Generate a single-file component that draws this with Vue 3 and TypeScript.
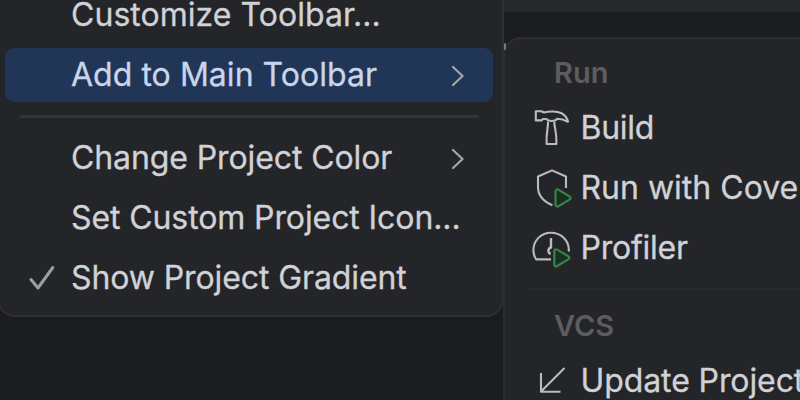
<script setup lang="ts">
interface MenuItem {
  label: string
  submenu?: boolean
  checked?: boolean
  active?: boolean
}

interface ActionItem {
  label: string
  icon: 'build' | 'coverage' | 'profiler' | 'update'
}

const groups: MenuItem[][] = [
  [{ label: 'Customize Toolbar...' }, { label: 'Add to Main Toolbar', submenu: true, active: true }],
  [
    { label: 'Change Project Color', submenu: true },
    { label: 'Set Custom Project Icon...' },
    { label: 'Show Project Gradient', checked: true },
  ],
]

const sections: { title: string; items: ActionItem[] }[] = [
  {
    title: 'Run',
    items: [
      { label: 'Build', icon: 'build' },
      { label: 'Run with Coverage', icon: 'coverage' },
      { label: 'Profiler', icon: 'profiler' },
    ],
  },
  { title: 'VCS', items: [{ label: 'Update Project...', icon: 'update' }] },
]
</script>

<template>
  <div class="screen">
    <div class="toolbar-strip"></div>

    <nav class="menu">
      <div v-for="(group, g) in groups" :key="g" class="group">
        <div v-for="item in group" :key="item.label" class="item" :class="{ active: item.active }">
          <span class="mark">
            <svg v-if="item.checked" width="28" height="28" viewBox="0 0 28 28">
              <path d="M4 15.5 11 24 25.8 3.5" fill="none" stroke="#9ba1a1" stroke-width="3" stroke-linecap="round" stroke-linejoin="round" />
            </svg>
          </span>
          <span class="label">{{ item.label }}</span>
          <svg v-if="item.submenu" class="chevron" width="16" height="24" viewBox="0 0 16 24">
            <path d="M3 4 12.6 13 3 22" fill="none" stroke="currentColor" stroke-width="2.2" stroke-linecap="round" stroke-linejoin="round" />
          </svg>
        </div>
      </div>
    </nav>

    <nav class="submenu">
      <section v-for="section in sections" :key="section.title" class="section">
        <h2 class="title">{{ section.title }}</h2>
        <div v-for="item in section.items" :key="item.label" class="action" :class="item.icon">
          <svg class="icon" width="44" height="44" viewBox="0 0 44 44" fill="none" stroke="#b9bbbe" stroke-width="2.1" stroke-linejoin="round">
            <template v-if="item.icon === 'build'">
              <path d="M5.8 5.2H11.5L14 6.5C19 5 27 5 31 7C35 9 37.3 12.4 38 15.8C34.5 13.8 30.5 12.8 27 12.8C25.5 15.6 18 15.6 16.5 13H13L11.5 14.4H5.8Z" />
              <path d="M18 15.5C18.5 21.5 16 25 16.6 38H26.4C27 25 24 21.5 24.3 15.5" />
            </template>
            <template v-else-if="item.icon === 'coverage'">
              <path d="M36 22V10.5L22 4.4L8 10.5V21C8 29 13.5 35.5 22.4 39.2" />
              <path d="M25.5 25.4C25.5 23.6 27 23 28.4 23.8L39.5 30.4C41 31.3 41 32.7 39.5 33.6L28.4 40.2C27 41 25.5 40.4 25.5 38.6Z" fill="#1b2e22" stroke="#38834a" stroke-width="2.2" />
            </template>
            <template v-else-if="item.icon === 'profiler'">
              <path d="M38.8 25.5C39.5 14.5 31 6.8 21 6.8C11 6.8 3.4 14.6 3.4 24C3.4 28 4.5 31 6.2 33.4H21" />
              <path d="M21 12V21.5A3.4 3.4 0 0 0 20.6 28" stroke-width="2.4" />
              <path d="M24.3 25.2C24.3 23.4 25.8 22.8 27.2 23.6L38.3 30.2C39.8 31.1 39.8 32.5 38.3 33.4L27.2 40C25.8 40.8 24.3 40.2 24.3 38.4Z" fill="#1b2e22" stroke="#38834a" stroke-width="2.2" />
            </template>
            <template v-else>
              <path d="M34.5 9 11 32.5M11 14V32.8H30.5" />
            </template>
          </svg>
          <span class="label">{{ item.label }}</span>
        </div>
      </section>
    </nav>
  </div>
</template>

<style>
body {
  margin: 0;
  overflow: hidden;
}
</style>

<style scoped>
.screen {
  position: relative;
  width: 800px;
  height: 400px;
  overflow: hidden;
  background: #1b1c1d;
  color: #d0d2d6;
  font: 400 32px/60px Inter, 'Liberation Sans', sans-serif;
  white-space: nowrap;
}

.toolbar-strip {
  height: 12px;
  background: #26272b;
}

.label {
  -webkit-text-stroke: 0.3px currentColor;
}

.menu {
  position: absolute;
  top: -21px;
  left: -3px;
  width: 507px;
  height: 338px;
  padding: 4px 9px 0 6px;
  box-sizing: border-box;
  border: 2px solid #2e2f32;
  border-radius: 0 0 18px 18px;
  background: #242529;
}

.group {
  display: flow-root;
}

.item {
  display: flex;
  align-items: center;
  height: 60px;
  padding-right: 27px;
  border-radius: 9px;
}

.group:first-child .label {
  letter-spacing: 0.04px;
}

.group + .group .label {
  letter-spacing: -0.1px;
}

.item.active {
  height: 54px;
  margin: 3px 0;
  background: #213556;
  color: #c8d5ea;
}

.mark {
  display: flex;
  width: 44px;
  padding-left: 22px;
}

.group + .group::before {
  content: '';
  display: block;
  height: 3px;
  margin: 10px 14px 10px 15px;
  background: #333437;
}

.chevron {
  margin-left: auto;
  color: #a3a6ac;
}

.submenu {
  position: absolute;
  top: 37px;
  left: 503px;
  width: 420px;
  height: 420px;
  box-sizing: border-box;
  padding: 8px 20px 0 25px;
  border: 2px solid #2c2d30;
  border-radius: 18px 0 0 0;
  background: #242529;
}

.submenu::before {
  content: '';
  position: absolute;
  top: 4px;
  left: -1px;
  width: 2px;
  height: 7px;
  border-radius: 1px;
  background: #77787a;
}

.submenu .label {
  letter-spacing: -0.25px;
}

.submenu .coverage .label {
  letter-spacing: 0;
}

.submenu .update .label {
  letter-spacing: -0.1px;
}

.section + .section {
  margin-top: 10px;
  border-top: 2px solid #292a2e;
  padding-top: 10px;
}

.title {
  margin: 0;
  padding-left: 24px;
  height: 51px;
  color: #5c5d61;
  font-size: 29px;
  font-weight: 600;
  line-height: 51px;
}

.action {
  display: flex;
  align-items: center;
  height: 60px;
}

.icon {
  flex: none;
  margin-right: 6.5px;
}
</style>
